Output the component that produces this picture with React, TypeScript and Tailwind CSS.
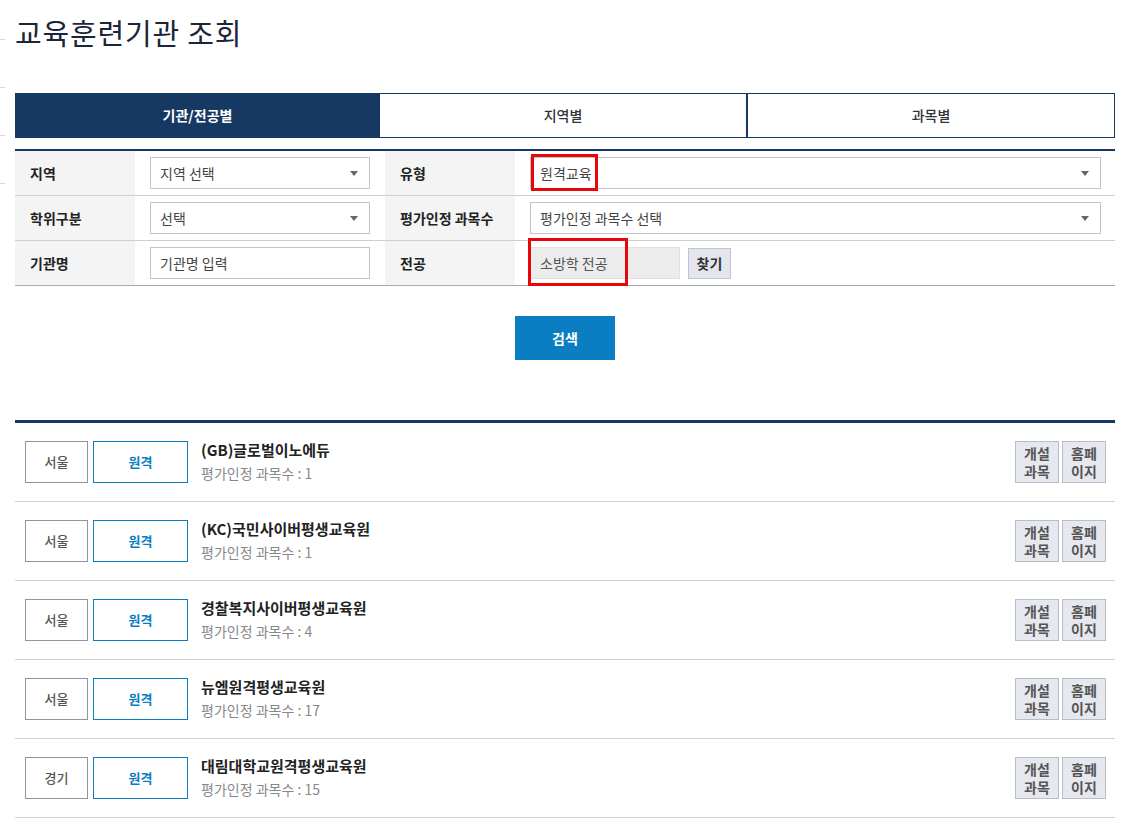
import React from "react";

const font = { fontFamily: '"Noto Sans CJK KR", "Noto Sans", sans-serif' };

function Arrow() {
  return (
    <svg width="8" height="5" viewBox="0 0 8 5" className="shrink-0">
      <path d="M0 0 L8 0 L4 5 Z" fill="#666" />
    </svg>
  );
}

function Select({ text, className = "" }: { text: string; className?: string }) {
  return (
    <div
      className={`h-[32px] border border-[#c4c4c4] bg-white flex items-center justify-between pl-[9px] pr-[11px] text-[14px] text-[#444] ${className}`}
    >
      <span>{text}</span>
      <Arrow />
    </div>
  );
}

const rows = [
  { region: "서울", name: "(GB)글로벌이노에듀", count: 1 },
  { region: "서울", name: "(KC)국민사이버평생교육원", count: 1 },
  { region: "서울", name: "경찰복지사이버평생교육원", count: 4 },
  { region: "서울", name: "뉴엠원격평생교육원", count: 17 },
  { region: "경기", name: "대림대학교원격평생교육원", count: 15 },
];

export default function App() {
  return (
    <div className="flex bg-white min-h-[820px] w-[1125px]" style={font}>
      <div className="w-[15px] shrink-0 flex flex-col">
        <div className="w-[5px] h-[40px] border-b border-[#d8d8d8]" />
        <div className="w-[5px] h-[48px] border-b border-[#d8d8d8]" />
        <div className="w-[5px] h-[48px] border-b border-[#d8d8d8]" />
        <div className="w-[5px] h-[48px] border-b border-[#d8d8d8]" />
      </div>
      <div className="w-[1100px] flex flex-col">
        <h1 className="text-[29px] leading-[38px] mt-[13px] text-[#1b2638] font-normal tracking-[0.8px]">
          교육훈련기관 조회
        </h1>

        <div className="mt-[42px] grid grid-cols-[365px_367px_368px] h-[45px] text-[14px]">
          <div className="bg-[#163963] text-white font-bold flex items-center justify-center">
            기관/전공별
          </div>
          <div className="border border-[#163963] border-l-0 flex items-center justify-center text-[#333] font-medium">
            지역별
          </div>
          <div className="border border-[#163963] border-l flex items-center justify-center text-[#333] font-medium">
            과목별
          </div>
        </div>

        <div className="mt-[11px] border-t-2 border-[#163963] text-[14px]">
          <div className="grid grid-cols-[120px_250px_130px_600px] h-[45px] border-b border-[#cfcfcf]">
            <div className="bg-[#f4f4f4] flex items-center pl-[15px] font-bold text-[#222]">지역</div>
            <div className="flex items-center pl-[15px] pr-[15px]">
              <Select text="지역 선택" className="w-full" />
            </div>
            <div className="bg-[#f4f4f4] flex items-center pl-[15px] font-bold text-[#222]">유형</div>
            <div className="flex items-center pl-[15px] pr-[14px] relative">
              <Select text="원격교육" className="w-full" />
              <div className="absolute left-[16px] top-[3px] w-[67px] h-[37px] border-[3px] border-[#e8060b]" />
            </div>
          </div>
          <div className="grid grid-cols-[120px_250px_130px_600px] h-[45px] border-b border-[#cfcfcf]">
            <div className="bg-[#f4f4f4] flex items-center pl-[15px] font-bold text-[#222]">학위구분</div>
            <div className="flex items-center pl-[15px] pr-[15px]">
              <Select text="선택" className="w-full" />
            </div>
            <div className="bg-[#f4f4f4] flex items-center pl-[15px] font-bold text-[#222]">평가인정 과목수</div>
            <div className="flex items-center pl-[15px] pr-[14px]">
              <Select text="평가인정 과목수 선택" className="w-full" />
            </div>
          </div>
          <div className="grid grid-cols-[120px_250px_130px_600px] h-[45px] border-b border-[#a9a9a9]">
            <div className="bg-[#f4f4f4] flex items-center pl-[15px] font-bold text-[#222]">기관명</div>
            <div className="flex items-center pl-[15px] pr-[15px]">
              <div className="w-full h-[32px] border border-[#c4c4c4] flex items-center pl-[9px] text-[#444]">
                기관명 입력
              </div>
            </div>
            <div className="bg-[#f4f4f4] flex items-center pl-[15px] font-bold text-[#222]">전공</div>
            <div className="flex items-center pl-[15px] relative">
              <div className="w-[150px] h-[32px] border border-[#e0e0e0] bg-[#ececec] flex items-center pl-[9px] text-[#555]">
                소방학 전공
              </div>
              <div className="ml-[8px] w-[43px] h-[31px] border border-[#bfc4d0] bg-[#e3e6ee] flex items-center justify-center font-bold text-[#333]">
                찾기
              </div>
              <div className="absolute left-[13px] top-[-3px] w-[100px] h-[48px] border-[3px] border-[#e8060b]" />
            </div>
          </div>
        </div>

        <div className="flex justify-center mt-[30px]">
          <div className="w-[100px] h-[44px] bg-[#0b7dc2] text-white font-bold text-[14px] flex items-center justify-center">
            검색
          </div>
        </div>

        <div className="mt-[60px] border-t-[3px] border-[#163963]">
          {rows.map((r, i) => (
            <div key={i} className="h-[79px] border-b border-[#d0d0d0] flex items-center pl-[10px] pr-[9px]">
              <div className="w-[63px] h-[42px] border border-[#8e969f] flex items-center justify-center text-[13px] text-[#555] font-medium">
                {r.region}
              </div>
              <div className="ml-[5px] w-[95px] h-[42px] border border-[#0b7dc2] flex items-center justify-center text-[13px] text-[#0b7dc2] font-bold">
                원격
              </div>
              <div className="ml-[13px] flex flex-col flex-1 -mt-[2px]">
                <div className="text-[15px] font-bold text-[#222] leading-[22px]">{r.name}</div>
                <div className="text-[14px] text-[#888] leading-[20px] mt-[2px]">평가인정 과목수 : {r.count}</div>
              </div>
              <div className="w-[44px] h-[42px] border border-[#b9bdc7] bg-[#e5e8ef] flex flex-col items-center justify-center text-[14px] leading-[18px] font-bold text-[#555]">
                <span>개설</span>
                <span>과목</span>
              </div>
              <div className="ml-[3px] w-[44px] h-[42px] border border-[#b9bdc7] bg-[#e5e8ef] flex flex-col items-center justify-center text-[14px] leading-[18px] font-bold text-[#555]">
                <span>홈페</span>
                <span>이지</span>
              </div>
            </div>
          ))}
        </div>
      </div>
    </div>
  );
}
